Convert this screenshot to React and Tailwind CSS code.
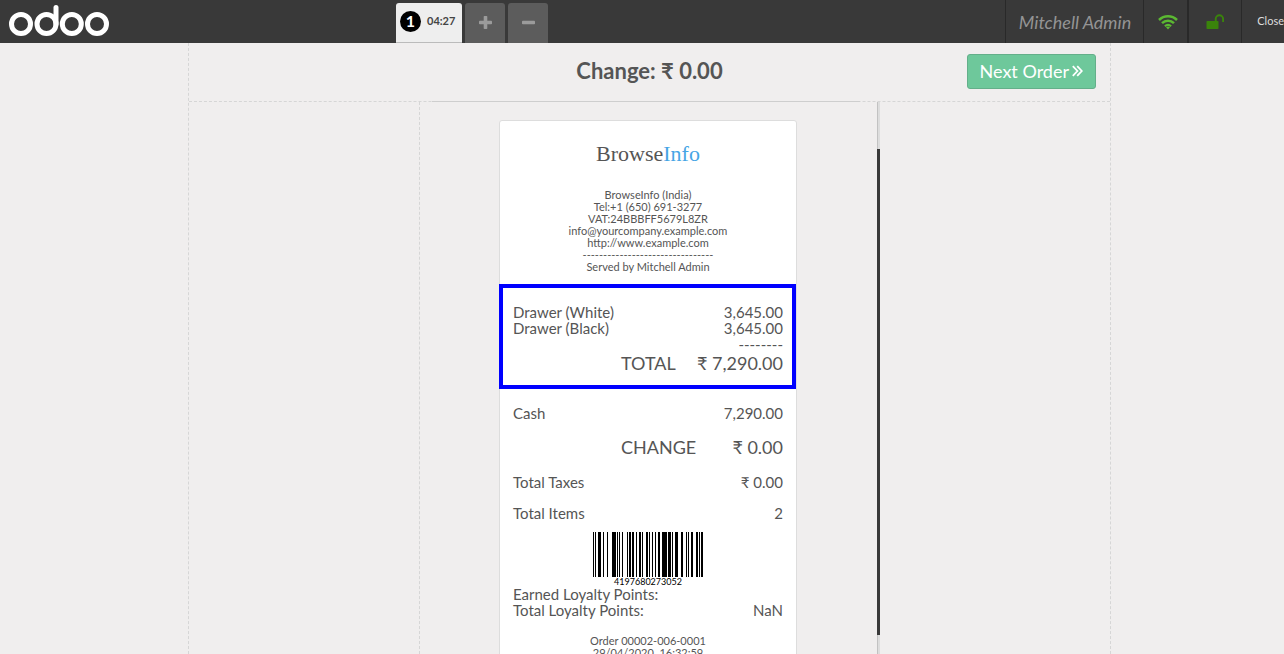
const BARS = [
  [0, 1], [2, 1], [5, 3], [10, 1], [14, 1], [19, 4], [24, 1], [26, 1], [29, 1],
  [34, 1], [36, 2], [39, 2], [43, 1], [46, 2], [49, 1], [53, 2], [56, 1], [59, 1],
  [62, 1], [65, 2], [69, 5], [75, 3], [79, 1], [82, 3], [88, 2], [93, 1], [95, 1],
  [98, 2], [103, 2], [106, 1], [108, 2],
];

function Logo() {
  return (
    <svg width="110" height="43" viewBox="0 0 110 43" fill="none" stroke="#fff" strokeWidth="5" role="img" aria-label="odoo">
      <circle cx="21" cy="24" r="9.5" />
      <circle cx="46.5" cy="24" r="9.5" />
      <circle cx="71.8" cy="24" r="9.5" />
      <circle cx="97" cy="24" r="9.5" />
      <path d="M56 24V7.5" strokeLinecap="round" />
    </svg>
  );
}

function PlusIcon() {
  return (
    <svg width="13" height="13" viewBox="0 0 13 13" fill="currentColor">
      <rect y="4.7" width="13" height="3.6" rx="0.8" />
      <rect x="4.7" width="3.6" height="13" rx="0.8" />
    </svg>
  );
}

function MinusIcon() {
  return (
    <svg width="13" height="13" viewBox="0 0 13 13" fill="currentColor">
      <rect y="4.7" width="13" height="3.6" rx="0.8" />
    </svg>
  );
}

function DoubleAngleIcon() {
  return (
    <svg width="11" height="12" viewBox="0 0 11 12" fill="none" stroke="currentColor" strokeWidth="1.8">
      <path d="M0.8 1.2L5.4 6L0.8 10.8M5.2 1.2L9.8 6L5.2 10.8" />
    </svg>
  );
}

function WifiIcon() {
  return (
    <svg width="20" height="16" viewBox="0 0 20 16" fill="none" stroke="#5bb832" strokeWidth="2.5">
      <path d="M1 6C6 1 14 1 19 6" />
      <path d="M4 9.2C7.4 5.8 12.6 5.8 16 9.2" />
      <path d="M6.9 12.2C8.7 10.4 11.3 10.4 13.1 12.2" strokeWidth="2.1" />
      <path d="M8 13.2Q10 11.8 12 13.2L10 15.4z" fill="#5bb832" stroke="none" />
    </svg>
  );
}

function UnlockIcon() {
  return (
    <svg width="18" height="16" viewBox="0 0 18 16">
      <rect x="0.5" y="7" width="12" height="8" rx="0.8" fill="#3a840b" />
      <path d="M9.7 7.5V5a3.7 3.7 0 0 1 7.4 0v3" fill="none" stroke="#3a840b" strokeWidth="1.9" />
    </svg>
  );
}

function Row({ label, value }) {
  return (
    <div className="flex justify-between text-[15px] leading-4">
      <span>{label}</span>
      <span>{value}</span>
    </div>
  );
}

function TotalRow({ label, value }) {
  return (
    <div className="flex justify-between pl-[40%] text-lg leading-[23px]">
      <span>{label}</span>
      <span>{value}</span>
    </div>
  );
}

function Header() {
  return (
    <header className="flex h-[43px] shrink-0 bg-[#393939]">
      <a href="#home" className="w-[396px] shrink-0"><Logo /></a>
      <nav className="flex grow gap-[3px] pt-[3px]">
        <button className="flex w-[66px] items-center gap-[6px] rounded-t-[3px] border-b border-[#bbb] bg-[#eee] pb-[2px] pl-1">
          <span className="flex size-[21px] items-center justify-center rounded-full bg-black pb-[2px] text-base font-bold text-white">1</span>
          <span className="text-[11px] font-bold text-[#444]">04:27</span>
        </button>
        <button aria-label="New order" className="flex w-10 items-center justify-center rounded-t-[3px] bg-[#5c5c5c] pb-[2px] text-[#9b9b9b]">
          <PlusIcon />
        </button>
        <button aria-label="Delete order" className="flex w-10 items-center justify-center rounded-t-[3px] bg-[#5c5c5c] pb-[2px] text-[#9b9b9b]">
          <MinusIcon />
        </button>
      </nav>
      <div className="flex shrink-0">
        <button className="border-l border-[#292929] pr-3 pl-[13px] text-lg text-[#949494] italic">Mitchell Admin</button>
        <button aria-label="Connection" className="flex w-[45px] items-center justify-center border-x border-[#292929] pl-1"><WifiIcon /></button>
        <button aria-label="Cash drawer" className="flex w-[53px] items-center justify-center border-l border-[#292929]"><UnlockIcon /></button>
        <button className="border-l border-[#292929] px-[15px] text-[11px] text-[#ddd]">Close</button>
      </div>
    </header>
  );
}

function Receipt() {
  return (
    <article className="mx-auto mt-[18px] w-[298px] rounded-[3px] border border-[#ddd] bg-white px-[13px] pt-[21px] pb-10">
      <h2 className="mb-[23px] text-center font-['Liberation_Serif',serif] text-[22px] leading-6">
        Browse<span className="text-[#46a5e5]">Info</span>
      </h2>
      <div className="text-center text-[11px] leading-3">
        <div>BrowseInfo (India)</div>
        <div>Tel:+1 (650) 691-3277</div>
        <div>VAT:24BBBFF5679L8ZR</div>
        <div>info@yourcompany.example.com</div>
        <div>http://www.example.com</div>
        <div>--------------------------------</div>
        <div>Served by Mitchell Admin</div>
      </div>
      <section className="-mr-[13px] -ml-[14px] mt-[11px] border-4 border-[#0000ff] pt-4 pr-[9px] pb-[10px] pl-[10px]">
        <Row label="Drawer (White)" value="3,645.00" />
        <Row label="Drawer (Black)" value="3,645.00" />
        <Row label="" value="--------" />
        <TotalRow label="TOTAL" value="₹ 7,290.00" />
      </section>
      <div className="mt-4 flex flex-col gap-[15px]">
        <Row label="Cash" value="7,290.00" />
        <TotalRow label="CHANGE" value="₹ 0.00" />
        <Row label="Total Taxes" value="₹ 0.00" />
        <Row label="Total Items" value="2" />
      </div>
      <div className="mt-[11px] flex flex-col items-center text-[9px] leading-[9px] text-black">
        <svg width="110" height="45" viewBox="0 0 110 45" shapeRendering="crispEdges">
          {BARS.map(([x, w]) => <rect key={x} x={x} width={w} height="45" />)}
        </svg>
        4197680273052
      </div>
      <Row label="Earned Loyalty Points:" value="" />
      <Row label="Total Loyalty Points:" value="NaN" />
      <div className="mt-[17px] text-center text-[11px] leading-3">
        <div>Order 00002-006-0001</div>
        <div className="whitespace-pre">29/04/2020  16:32:59</div>
      </div>
    </article>
  );
}

export default function App() {
  return (
    <div className="h-screen overflow-hidden bg-[#f0eeee] font-[Lato,sans-serif] text-[#555]">
      <div className="flex h-full w-[calc(100%+15px)] flex-col">
        <Header />
        <main className="mx-auto flex min-h-0 w-full max-w-[923px] grow flex-col border-x border-dashed border-[#d6d6d6]">
          <div className="relative grid h-[59px] shrink-0 grid-cols-4 border-b border-dashed border-[#d6d6d6]">
            <h1 className="col-span-2 col-start-2 pt-3 text-center text-[22px] leading-8 font-bold">Change: ₹ 0.00</h1>
            <div className="flex items-start justify-end pt-[11px] pr-[14px]">
              <button className="flex h-[35px] items-center gap-[3px] rounded-[3px] border border-[#64af8a] bg-[#6ec89b] px-3 pb-[2px] text-lg whitespace-nowrap text-white">
                Next Order <DoubleAngleIcon />
              </button>
            </div>
            <div className="absolute inset-x-1/4 -bottom-px flex px-[13px]">
              <div className="mr-[7px] h-px grow bg-[#cecece]" />
            </div>
          </div>
          <div className="grid min-h-0 grow grid-cols-[1fr_2fr_1fr]">
            <div className="-mr-px border-r border-dashed border-[#d6d6d6]" />
            <div className="relative min-h-0 overflow-hidden pr-[3px]">
              <Receipt />
              <div className="absolute inset-y-0 right-0 w-[3px] border-l border-[#c2c2c2] bg-[#ddd]" />
              <div className="absolute top-[47px] right-0 bottom-[19px] w-[3px] bg-[#393939]" />
            </div>
            <div />
          </div>
        </main>
      </div>
    </div>
  );
}
